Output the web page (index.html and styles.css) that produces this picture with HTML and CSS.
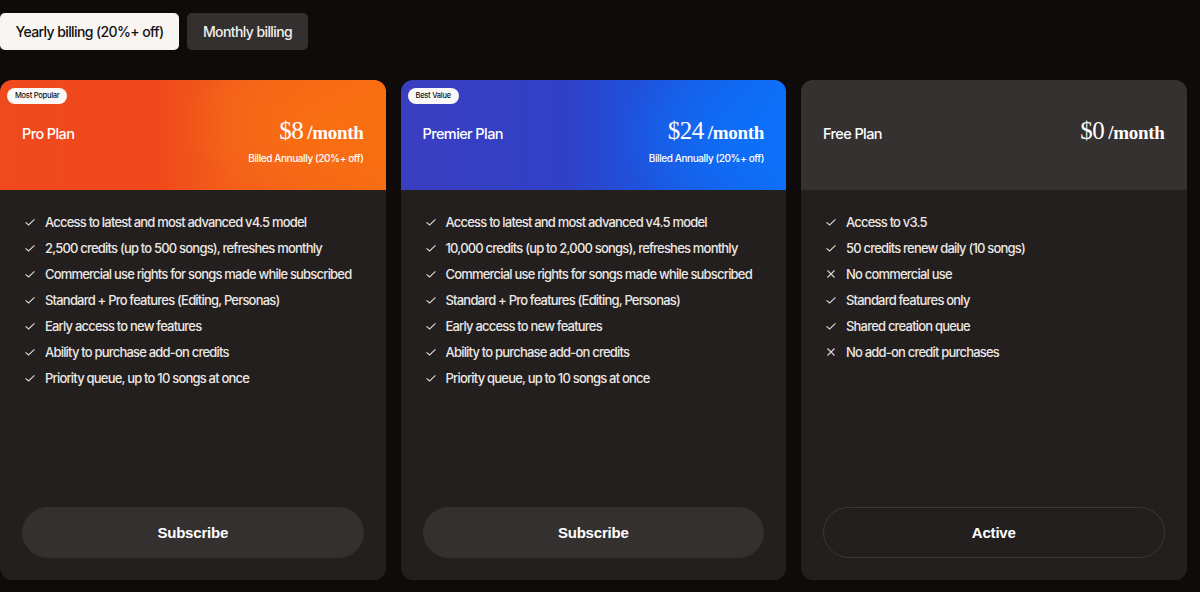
FILE: index.html
```html
<!DOCTYPE html>
<html>
<head>
<meta charset="utf-8">
<link rel="stylesheet" href="styles.css">
</head>
<body>
<div class="page">
  <div class="toggle">
    <button class="tbtn active">Yearly billing (20%+ off)</button>
    <button class="tbtn">Monthly billing</button>
  </div>
  <div class="cards">
    <div class="card">
      <div class="head pro">
        <span class="badge">Most Popular</span>
        <div class="head-row">
          <div class="name">Pro Plan</div>
          <div class="price-col">
            <div class="price"><span class="amt">$8</span> <span class="per">/month</span></div>
            <div class="billed">Billed Annually (20%+ off)</div>
          </div>
        </div>
      </div>
      <div class="body">
        <ul class="feats">
          <li><svg class="ic" viewBox="0 0 10 10"><path d="M0.5 5.3 L3.6 8 L9.5 2.3"/></svg>Access to latest and most advanced v4.5 model</li>
          <li><svg class="ic" viewBox="0 0 10 10"><path d="M0.5 5.3 L3.6 8 L9.5 2.3"/></svg>2,500 credits (up to 500 songs), refreshes monthly</li>
          <li><svg class="ic" viewBox="0 0 10 10"><path d="M0.5 5.3 L3.6 8 L9.5 2.3"/></svg>Commercial use rights for songs made while subscribed</li>
          <li><svg class="ic" viewBox="0 0 10 10"><path d="M0.5 5.3 L3.6 8 L9.5 2.3"/></svg>Standard + Pro features (Editing, Personas)</li>
          <li><svg class="ic" viewBox="0 0 10 10"><path d="M0.5 5.3 L3.6 8 L9.5 2.3"/></svg>Early access to new features</li>
          <li><svg class="ic" viewBox="0 0 10 10"><path d="M0.5 5.3 L3.6 8 L9.5 2.3"/></svg>Ability to purchase add-on credits</li>
          <li><svg class="ic" viewBox="0 0 10 10"><path d="M0.5 5.3 L3.6 8 L9.5 2.3"/></svg>Priority queue, up to 10 songs at once</li>
        </ul>
        <button class="cta">Subscribe</button>
      </div>
    </div>
    <div class="card">
      <div class="head premier">
        <span class="badge">Best Value</span>
        <div class="head-row">
          <div class="name">Premier Plan</div>
          <div class="price-col">
            <div class="price"><span class="amt">$24</span> <span class="per">/month</span></div>
            <div class="billed">Billed Annually (20%+ off)</div>
          </div>
        </div>
      </div>
      <div class="body">
        <ul class="feats">
          <li><svg class="ic" viewBox="0 0 10 10"><path d="M0.5 5.3 L3.6 8 L9.5 2.3"/></svg>Access to latest and most advanced v4.5 model</li>
          <li><svg class="ic" viewBox="0 0 10 10"><path d="M0.5 5.3 L3.6 8 L9.5 2.3"/></svg>10,000 credits (up to 2,000 songs), refreshes monthly</li>
          <li><svg class="ic" viewBox="0 0 10 10"><path d="M0.5 5.3 L3.6 8 L9.5 2.3"/></svg>Commercial use rights for songs made while subscribed</li>
          <li><svg class="ic" viewBox="0 0 10 10"><path d="M0.5 5.3 L3.6 8 L9.5 2.3"/></svg>Standard + Pro features (Editing, Personas)</li>
          <li><svg class="ic" viewBox="0 0 10 10"><path d="M0.5 5.3 L3.6 8 L9.5 2.3"/></svg>Early access to new features</li>
          <li><svg class="ic" viewBox="0 0 10 10"><path d="M0.5 5.3 L3.6 8 L9.5 2.3"/></svg>Ability to purchase add-on credits</li>
          <li><svg class="ic" viewBox="0 0 10 10"><path d="M0.5 5.3 L3.6 8 L9.5 2.3"/></svg>Priority queue, up to 10 songs at once</li>
        </ul>
        <button class="cta">Subscribe</button>
      </div>
    </div>
    <div class="card">
      <div class="head free">
        <div class="head-row">
          <div class="name">Free Plan</div>
          <div class="price-col">
            <div class="price"><span class="amt">$0</span> <span class="per">/month</span></div>
          </div>
        </div>
      </div>
      <div class="body">
        <ul class="feats">
          <li><svg class="ic" viewBox="0 0 10 10"><path d="M0.5 5.3 L3.6 8 L9.5 2.3"/></svg>Access to v3.5</li>
          <li><svg class="ic" viewBox="0 0 10 10"><path d="M0.5 5.3 L3.6 8 L9.5 2.3"/></svg>50 credits renew daily (10 songs)</li>
          <li><svg class="ic" viewBox="0 0 10 10"><path d="M1.5 1.5 L8.5 8.5 M8.5 1.5 L1.5 8.5"/></svg>No commercial use</li>
          <li><svg class="ic" viewBox="0 0 10 10"><path d="M0.5 5.3 L3.6 8 L9.5 2.3"/></svg>Standard features only</li>
          <li><svg class="ic" viewBox="0 0 10 10"><path d="M0.5 5.3 L3.6 8 L9.5 2.3"/></svg>Shared creation queue</li>
          <li><svg class="ic" viewBox="0 0 10 10"><path d="M1.5 1.5 L8.5 8.5 M8.5 1.5 L1.5 8.5"/></svg>No add-on credit purchases</li>
        </ul>
        <button class="cta outline">Active</button>
      </div>
    </div>
  </div>
</div>
</body>
</html>
```
FILE: styles.css
```css
* { box-sizing: border-box; }
html, body { margin: 0; padding: 0; background: #0f0b0b; }
body { font-family: Inter, "Liberation Sans", sans-serif; color: #f2efec; }
.page { padding-top: 13px; width: 1200px; height: 592px; overflow: hidden; }
.toggle { display: flex; gap: 8px; }
.tbtn {
  height: 37px; border: none; border-radius: 5px; padding: 0 14px;
  font-family: Inter, "Liberation Sans", sans-serif; font-size: 14px; font-weight: 500;
  letter-spacing: -0.6px; background: #343030; color: #f2efec;
}
.tbtn.active { background: #f8f5f2; color: #111; width: 179px; }
.tbtn:not(.active) { width: 121px; }
.cards { display: flex; gap: 15px; margin-top: 30px; }
.card {
  width: 385.5px; height: 500px; border-radius: 12px; overflow: hidden;
  background: #231f1f; display: flex; flex-direction: column;
}
.head { position: relative; height: 110px; padding: 0 22px; }
.head.pro {
  background:
    radial-gradient(ellipse 55% 90% at 88% 40%, rgba(250,112,18,0.9), rgba(250,112,18,0) 75%),
    linear-gradient(90deg, #ee4a1e 0%, #f0471b 40%, #f3601a 60%, #f86d12 100%);
}
.head.premier {
  background:
    radial-gradient(ellipse 50% 100% at 95% 50%, rgba(12,112,250,0.95), rgba(12,112,250,0) 80%),
    linear-gradient(90deg, #3a3ec0 0%, #3040c6 42%, #1f52dc 62%, #0e6ff6 100%);
}
.head.free { background: #353131; }
.badge {
  position: absolute; left: 7px; top: 8px; height: 16px; padding: 0 8px;
  background: #fbf9f7; color: #111; border-radius: 8px;
  font-size: 7.5px; line-height: 16px; letter-spacing: -0.25px; font-weight: 500;
}
.head-row { display: flex; justify-content: space-between; padding-top: 36px; }
.name { font-size: 14.5px; font-weight: 500; letter-spacing: -0.6px; margin-top: 9px; color: #fff; }
.price-col { display: flex; flex-direction: column; align-items: flex-end; }
.price { font-family: "Liberation Serif", serif; color: #fff; line-height: 30px; white-space: nowrap; }
.amt { font-size: 25px; letter-spacing: -0.5px; }
.per { font-size: 19px; font-weight: bold; letter-spacing: -0.3px; }
.billed { font-size: 10px; font-weight: 500; letter-spacing: -0.4px; margin-top: 3px; color: #fff; }
.body { flex: 1; display: flex; flex-direction: column; padding: 19px 22px 22px; }
.feats { list-style: none; margin: 0; padding: 0; flex: 1; }
.feats li {
  display: flex; align-items: center; height: 26px; white-space: nowrap;
  font-size: 13px; font-weight: 500; letter-spacing: -0.8px; color: #ebe7e4;
}
.ic { width: 10px; height: 10px; margin: 0 10px 0 3px; fill: none; stroke: #ddd8d5; stroke-width: 1.1; flex: none; }
.cta {
  height: 51px; border-radius: 26px; border: 1px solid #353030; background: #353030;
  color: #fff; font-family: "Liberation Sans", Arial, sans-serif; font-weight: bold; font-size: 15px;
  letter-spacing: -0.2px;
}
.cta.outline { background: transparent; border-color: #3d3838; }
```
